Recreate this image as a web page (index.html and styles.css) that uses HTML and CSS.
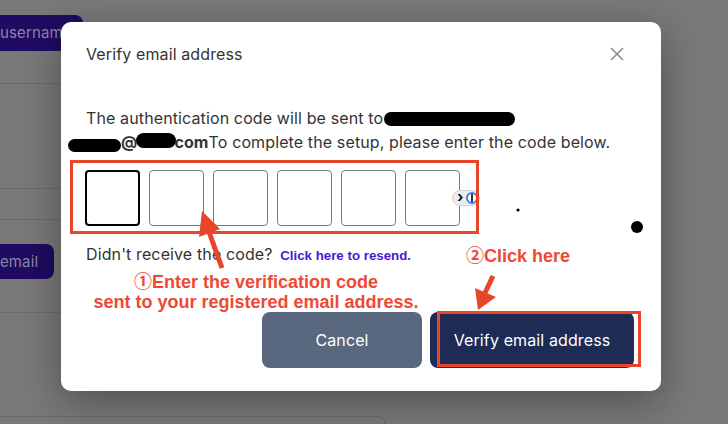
FILE: index.html
```html
<!DOCTYPE html>
<html lang="en">
<head>
<meta charset="utf-8">
<title>Verify email address</title>
<link rel="stylesheet" href="styles.css">
</head>
<body>
<div class="page">
  <div class="prow prow-1"><span class="pbtn pbtn-user">username</span></div>
  <div class="prow prow-2"></div>
  <div class="prow prow-3"></div>
  <div class="prow prow-4"><span class="pbtn pbtn-email">email</span></div>
  <div class="pfield"></div>
</div>

<div class="modal">
  <div class="modal-head">
    <h2 class="modal-title">Verify email address</h2>
    <svg class="close" width="14" height="14" viewBox="0 0 14 14"><path d="M1 1L13 13M13 1L1 13" stroke="#8e8e8e" stroke-width="1.6" fill="none"/></svg>
  </div>
  <div class="modal-body">
    <p class="lead">The authentication code will be sent to<span class="redact r1"></span><br><span class="redact r2"></span><b>@</b><span class="redact r3"></span><b class="com">com</b>To complete the setup, please enter the code below.</p>
    <div class="code-wrap">
      <div class="codes">
        <span class="box active"></span>
        <span class="box"></span>
        <span class="box"></span>
        <span class="box"></span>
        <span class="box"></span>
        <span class="box"></span>
      </div>
      <span class="ext"><span class="chev">&#x203A;</span><span class="ring"></span></span>
      <span class="redbox"></span>
    </div>
    <p class="resend">Didn't receive the code? <a class="resend-link">Click here to resend.</a></p>
    <div class="actions">
      <button class="btn btn-cancel">Cancel</button>
      <div class="verify-wrap">
        <button class="btn btn-verify">Verify email address</button>
        <span class="redbox-btn"></span>
      </div>
    </div>
  </div>
</div>

<div class="note note-1">①Enter the verification code<br>sent to your registered email address.</div>
<div class="note note-2">②Click here</div>

<svg class="marks" width="728" height="424" viewBox="0 0 728 424">
  <line x1="222" y1="268" x2="208" y2="229" stroke="#e8452b" stroke-width="5"/>
  <polygon points="202,211 220,229 199,237" fill="#e8452b"/>
  <line x1="493" y1="276" x2="484" y2="295" stroke="#e8452b" stroke-width="5"/>
  <polygon points="478,310 475,288 496,297" fill="#e8452b"/>
  <circle cx="518" cy="210" r="1.6" fill="#000"/>
  <circle cx="637" cy="227" r="6" fill="#000"/>
</svg>
</body>
</html>
```

FILE: styles.css
```css
html, body {
  margin: 0;
  padding: 0;
}
body {
  width: 728px;
  height: 424px;
  overflow: hidden;
  background: #797979;
  font-family: Inter, "Noto Sans", sans-serif;
  letter-spacing: 0.12px;
  position: relative;
}

/* background page (dimmed by overlay) */
.page {
  width: 385px;
}
.prow {
  box-sizing: border-box;
  border-bottom: 1px solid #6c6c6c;
}
.prow-1 { height: 84px; padding-top: 15px; }
.prow-2 { height: 105px; }
.prow-3 { height: 31px; }
.prow-4 { height: 93px; padding-top: 24px; }
.pbtn {
  display: inline-block;
  height: 36px;
  line-height: 36px;
  padding: 0 16px;
  margin-left: -16px;
  background: #1f0b62;
  color: #8b86a8;
  font-size: 15px;
  border-radius: 8px;
  white-space: nowrap;
  vertical-align: top;
}
.pbtn-user { width: 67px; }
.pbtn-email { height: 35px; line-height: 35px; margin-left: -20px; padding: 0 16px 0 20px; }
.pfield {
  margin-top: 103px;
  height: 7px;
  border: 1px solid #686868;
  border-left: 0;
  border-bottom: 0;
  border-radius: 0 6px 0 0;
}

/* modal */
.modal {
  position: absolute;
  left: 61px;
  top: 22px;
  width: 600px;
  box-sizing: border-box;
  background: #fff;
  border-radius: 10px;
  box-shadow: 0 10px 40px rgba(0, 0, 0, 0.35);
  color: #333;
}
.modal-head {
  height: 62px;
  padding: 0 37px 0 25px;
  display: flex;
  align-items: center;
  justify-content: space-between;
}
.modal-title {
  margin: 0;
  font-size: 16px;
  font-weight: 400;
  color: #333;
  padding-top: 1px;
}
.close { display: block; margin-top: 1px; }

.modal-body {
  padding: 22px 27px 23px 25px;
}
.lead {
  margin: 0;
  font-size: 16px;
  line-height: 24px;
  white-space: nowrap;
}
.lead b { font-weight: 700; }
.redact {
  display: inline-block;
  background: #000;
  border-radius: 8px;
  position: relative;
}
.r1 { width: 131px; height: 14px; margin-left: 1px; top: -1px; vertical-align: middle; }
.r2 { width: 53px; height: 13px; margin-left: -18px; top: 2px; vertical-align: middle; }
.r3 { width: 40px; height: 15px; margin-left: -1px; top: -3px; vertical-align: middle; }
.com { margin-left: -2px; }

.code-wrap {
  position: relative;
  margin: 6px 0 0 -16px;
  width: 409px;
  height: 74px;
  box-sizing: border-box;
  padding: 10px 0 0 15px;
}
.codes {
  display: flex;
  gap: 9px;
}
.box {
  width: 55px;
  height: 56px;
  box-sizing: border-box;
  border: 1px solid #7a7a7a;
  border-radius: 4px;
  background: #fff;
}
.box.active { border: 2px solid #000; }
.ext {
  position: absolute;
  left: 382px;
  top: 30px;
  width: 28px;
  height: 16px;
  box-sizing: border-box;
  border: 1px solid #d4d4d4;
  border-radius: 8px;
  background: #ececec;
  display: flex;
  align-items: center;
  padding-left: 4px;
  gap: 2px;
}
.chev {
  font-size: 15px;
  line-height: 14px;
  font-weight: 700;
  color: #111;
  margin-top: -2px;
}
.ring {
  width: 8px;
  height: 8px;
  border: 2px solid #3a7ef0;
  border-radius: 50%;
  background: linear-gradient(90deg, #fff 35%, #333 35%, #333 65%, #fff 65%);
}
.redbox {
  position: absolute;
  inset: 0;
  border: 3px solid #e8452b;
}

.resend {
  margin: 8px 0 0;
  font-size: 16px;
  line-height: 24px;
  color: #333;
}
.resend-link {
  font-family: "Liberation Sans", Arial, sans-serif;
  font-weight: 700;
  font-size: 13.3px;
  letter-spacing: 0;
  color: #4b18d4;
  margin-left: 3px;
}

.actions {
  margin-top: 44px;
  display: flex;
  justify-content: flex-end;
  gap: 8px;
}
.btn {
  height: 56px;
  border: 0;
  border-radius: 8px;
  color: #fff;
  font-family: Inter, "Noto Sans", sans-serif;
  font-size: 16px;
  letter-spacing: 0.12px;
  padding: 0;
}
.btn-cancel {
  width: 160px;
  background: #59677f;
}
.verify-wrap { position: relative; }
.btn-verify {
  display: block;
  width: 204px;
  background: #1e2b55;
}
.redbox-btn {
  position: absolute;
  left: 7px;
  top: -1px;
  width: 204px;
  height: 56px;
  box-sizing: border-box;
  border: 3px solid #e8452b;
}

/* annotations */
.note {
  position: absolute;
  font-family: "Liberation Sans", Arial, "Noto Sans CJK JP", sans-serif;
  font-weight: 700;
  font-size: 18px;
  line-height: 20px;
  letter-spacing: 0;
  color: #ec4a36;
  white-space: nowrap;
}
.note-1 {
  left: 56px;
  top: 272px;
  width: 400px;
  text-align: center;
}
.note-2 {
  left: 466px;
  top: 246px;
}
.marks {
  position: absolute;
  left: 0;
  top: 0;
  pointer-events: none;
}
```
